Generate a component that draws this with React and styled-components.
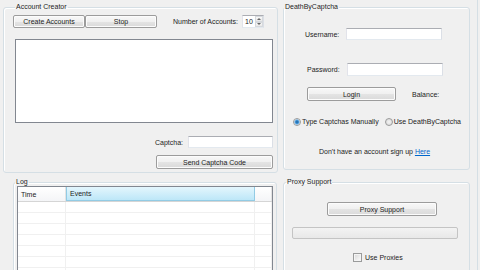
import React from 'react';
import styled, { createGlobalStyle } from 'styled-components';

const GlobalStyle = createGlobalStyle`
  html, body {
    margin: 0;
    padding: 0;
    background: #f0f0f0;
  }
  body {
    font-family: "Liberation Sans", Arial, sans-serif;
    font-size: 7px;
    color: #1c1c1c;
  }
`;

export const Window = styled.div`
  box-sizing: border-box;
  width: 478px;
  height: 270px;
  overflow: hidden;
  padding: 3px 0 0 3px;
  border-right: 1px solid #d5dfe5;
  display: grid;
  grid-template-columns: 275px 187px;
  column-gap: 5px;
  align-items: start;
  background: #f0f0f0;
`;

export const Column = styled.div`
  display: flex;
  flex-direction: column;
`;

export const Group = styled.fieldset`
  box-sizing: border-box;
  margin: ${p => p.$top || 0}px 0 0 ${p => p.$indent || 0}px;
  padding: 0 0 ${p => p.$bottom || 0}px 0;
  width: ${p => p.$w}px;
  min-width: 0;
  border: 1px solid #d5dfe5;
  border-radius: 3px;
  box-shadow: inset 1px 1px 0 #fff;
  display: flex;
  flex-direction: column;
`;

export const Title = styled.legend`
  margin-left: ${p => p.$offset}px;
  padding: 0 1px;
  font-size: 7px;
  line-height: 8px;
`;

export const Button = styled.div`
  box-sizing: border-box;
  width: ${p => p.$w}px;
  height: ${p => p.$h}px;
  flex: none;
  border: 1px solid #9c9c9c;
  border-radius: 2px;
  background: linear-gradient(#f8f8f8 0%, #f0f0f0 50%, #e4e4e4 51%, #dadada 100%);
  box-shadow: inset 0 0 0 1px #fcfcfc;
  display: flex;
  align-items: center;
  justify-content: center;
  line-height: 1;
`;

export const Row = styled.div`
  display: flex;
  align-items: center;
  height: ${p => p.$h}px;
  margin-top: ${p => p.$top || 0}px;
  padding-left: ${p => p.$left || 0}px;
  gap: ${p => p.$gap || 0}px;
`;

export const Label = styled.span`
  width: ${p => (p.$w ? `${p.$w}px` : 'auto')};
  flex: none;
  text-align: ${p => p.$align || 'left'};
  margin-left: ${p => p.$ml || 0}px;
  white-space: nowrap;
`;

export const TextBox = styled.div`
  box-sizing: border-box;
  width: ${p => p.$w}px;
  height: ${p => p.$h}px;
  flex: none;
  background: #fff;
  border: 1px solid;
  border-color: #abadb3 #dbdfe6 #e3e9ef #e2e3ea;
`;

export const Spinner = styled.div`
  box-sizing: border-box;
  width: 22px;
  height: 13px;
  margin-left: 4px;
  background: #fff;
  border: 1px solid;
  border-color: #abadb3 #dbdfe6 #e3e9ef #e2e3ea;
  display: flex;
  align-items: center;
  padding-left: 2px;
`;

export const SpinValue = styled.span`
  flex: 1;
`;

export const SpinButtons = styled.div`
  width: 8px;
  height: 100%;
  display: flex;
  flex-direction: column;
`;

export const SpinButton = styled.div`
  flex: 1;
  border: 1px solid #d6d9dd;
  background: linear-gradient(#f8f8f8, #e8e8e8);
  display: flex;
  align-items: center;
  justify-content: center;
  &::after {
    content: '';
    border-left: 2px solid transparent;
    border-right: 2px solid transparent;
    ${p => (p.$down ? 'border-top: 2px solid #666;' : 'border-bottom: 2px solid #666;')}
  }
`;

export const ListBox = styled.div`
  box-sizing: border-box;
  width: 258px;
  height: 84px;
  margin: 11px 0 0 11px;
  background: #fff;
  border: 1px solid #828790;
`;

export const CaptchaRow = styled.div`
  width: 258px;
  height: 12px;
  margin: 13px 0 0 11px;
  display: flex;
  align-items: center;
  justify-content: flex-end;
  gap: 5px;
`;

export const Offset = styled.div`
  margin: ${p => p.$top || 0}px 0 0 ${p => p.$left || 0}px;
`;

export const ListView = styled.div`
  box-sizing: border-box;
  width: 256px;
  height: 100px;
  margin-left: 3px;
  background: #fff;
  border: 1px solid #828790;
`;

export const LvRow = styled.div`
  box-sizing: border-box;
  display: grid;
  grid-template-columns: 48px 189px 1fr;
  height: ${p => (p.$header ? 15 : 11)}px;
  border-bottom: 1px solid ${p => (p.$header ? '#d5d5d5' : '#f0f0f0')};
`;

export const LvCell = styled.div`
  box-sizing: border-box;
  border-right: 1px solid ${p => (p.$header ? '#e3e3e3' : '#f0f0f0')};
  padding-left: 3px;
  display: flex;
  align-items: center;
  ${p => p.$header && 'background: linear-gradient(#ffffff, #f4f5f7);'}
  ${p => p.$active && 'background: linear-gradient(#e4f6fd, #bde7f8); border: 1px solid #92cbe4; border-top: 0;'}
`;

export const Radio = styled.span`
  box-sizing: border-box;
  width: 8px;
  height: 8px;
  flex: none;
  border-radius: 50%;
  border: 1px solid #9a9b9b;
  background: ${p =>
    p.$checked
      ? 'radial-gradient(circle, #1b5f9b 0, #3b8ed0 1.5px, #9ccaf0 2.5px, #e8eef4 3px)'
      : 'radial-gradient(circle, #f4f4f4 0, #dedede 3px)'};
`;

export const Option = styled.label`
  display: flex;
  align-items: center;
  gap: 1px;
`;

export const CheckBox = styled.span`
  box-sizing: border-box;
  width: 9px;
  height: 9px;
  flex: none;
  border: 1px solid #9a9b9b;
  background: linear-gradient(135deg, #d6d6d6, #fdfdfd);
  box-shadow: inset 0 0 0 1px #f4f4f4;
`;

export const LinkLine = styled.div`
  margin-top: 21px;
  padding-left: 35px;
  line-height: 9px;
  height: 9px;
`;

export const Link = styled.a`
  color: #0066cc;
  text-decoration: underline;
`;

export const Progress = styled.div`
  box-sizing: border-box;
  width: 166px;
  height: 12px;
  margin: 11px 0 0 8px;
  border: 1px solid #c4c4c4;
  border-radius: 2px;
  background: linear-gradient(#f3f3f3, #e8e8e8);
`;

const logRows = Array.from({ length: 7 });

export default function App() {
  return (
    <>
      <GlobalStyle />
      <Window>
        <Column>
          <Group $w={275} $bottom={3}>
            <Title $offset={11}>Account Creator</Title>
            <Row $h={13} $top={4} $left={9}>
              <Button $w={72} $h={13}>Create Accounts</Button>
              <Button $w={72} $h={13}>Stop</Button>
              <Label $w={81} $align="right">Number of Accounts:</Label>
              <Spinner>
                <SpinValue>10</SpinValue>
                <SpinButtons>
                  <SpinButton />
                  <SpinButton $down />
                </SpinButtons>
              </Spinner>
            </Row>
            <ListBox />
            <CaptchaRow>
              <Label>Captcha:</Label>
              <TextBox $w={85} $h={12} />
            </CaptchaRow>
            <Offset $top={7} $left={152}>
              <Button $w={117} $h={14}>Send Captcha Code</Button>
            </Offset>
          </Group>

          <Group $w={264} $top={5} $indent={10} $bottom={20}>
            <Title $offset={1}>Log</Title>
            <ListView>
              <LvRow $header>
                <LvCell $header>Time</LvCell>
                <LvCell $header $active>Events</LvCell>
                <LvCell $header />
              </LvRow>
              {logRows.map((_, i) => (
                <LvRow key={i}>
                  <LvCell />
                  <LvCell />
                  <LvCell />
                </LvRow>
              ))}
            </ListView>
          </Group>
        </Column>

        <Column>
          <Group $w={187} $bottom={13}>
            <Title $offset={0}>DeathByCaptcha</Title>
            <Row $h={12} $top={17} $left={21}>
              <Label $w={41}>Username:</Label>
              <TextBox $w={96} $h={12} />
            </Row>
            <Row $h={13} $top={23} $left={23}>
              <Label $w={40}>Password:</Label>
              <TextBox $w={96} $h={13} />
            </Row>
            <Row $h={14} $top={11} $left={23}>
              <Button $w={89} $h={14}>Login</Button>
              <Label $ml={16}>Balance:</Label>
            </Row>
            <Row $h={9} $top={16} $left={9} $gap={6}>
              <Option>
                <Radio $checked />
                Type Captchas Manually
              </Option>
              <Option>
                <Radio />
                Use DeathByCaptcha
              </Option>
            </Row>
            <LinkLine>
              Don't have an account sign up <Link>Here</Link>
            </LinkLine>
          </Group>

          <Group $w={187} $top={8} $bottom={20}>
            <Title $offset={2}>Proxy Support</Title>
            <Offset $top={16} $left={43}>
              <Button $w={110} $h={14}>Proxy Support</Button>
            </Offset>
            <Progress />
            <Row $h={9} $top={14} $left={69} $gap={3}>
              <CheckBox />
              <Label>Use Proxies</Label>
            </Row>
          </Group>
        </Column>
      </Window>
    </>
  );
}
